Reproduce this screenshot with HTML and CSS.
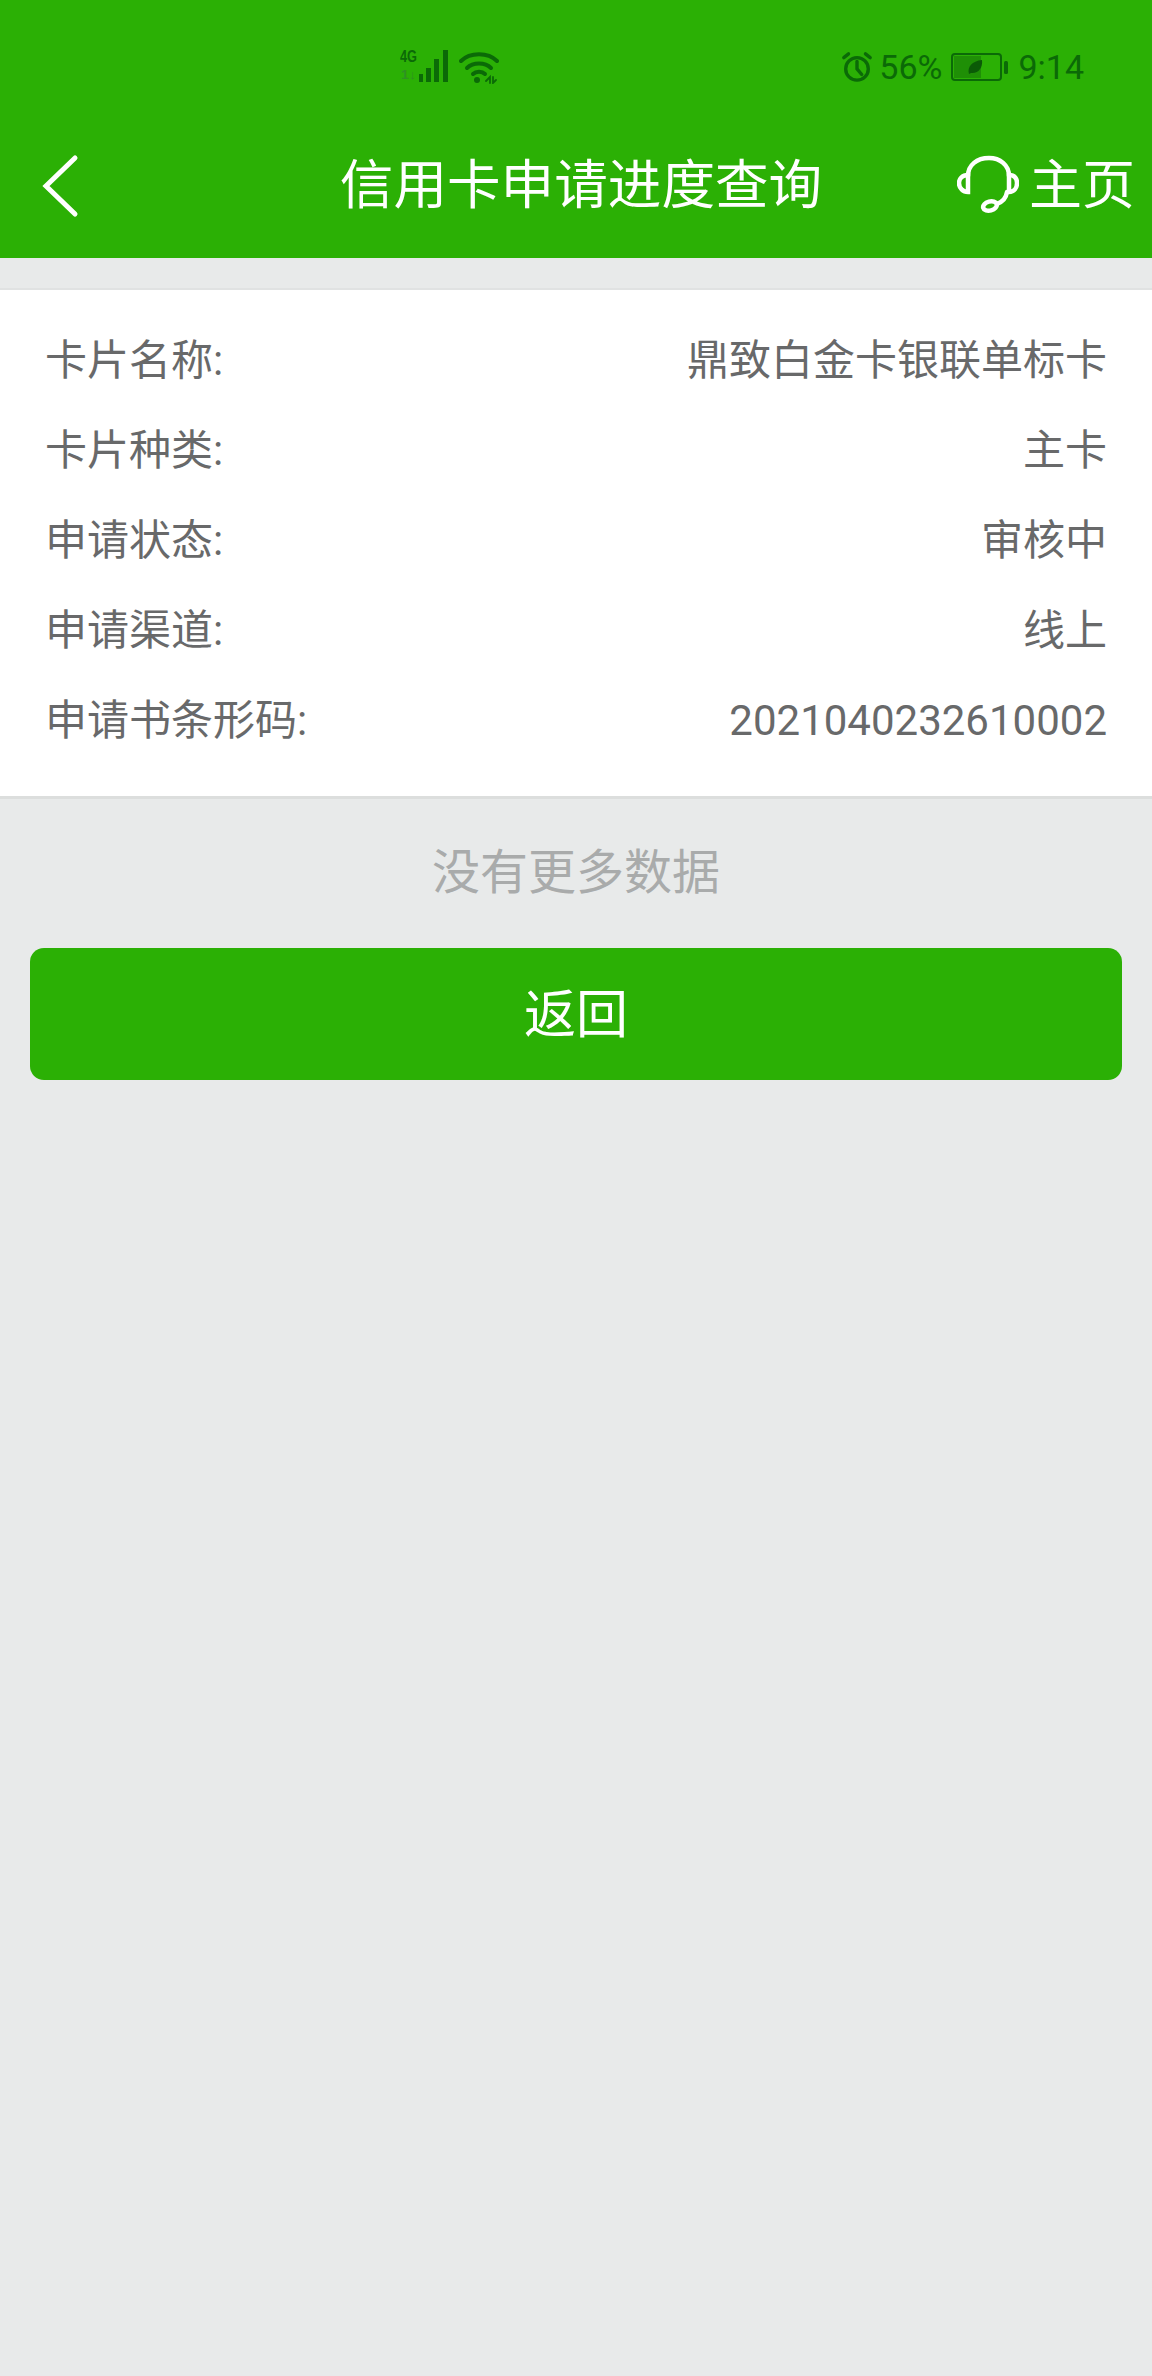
FILE: index.html
```html
<!DOCTYPE html>
<html lang="zh-CN">
<head>
<meta charset="UTF-8">
<meta name="viewport" content="width=device-width, initial-scale=1.0">
<title>信用卡申请进度查询</title>
<link rel="stylesheet" href="styles.css">
</head>
<body>
<div class="header">
    <div class="status-bar">
        <div class="status-left">
            <svg class="icon-signal" width="52" height="36" viewBox="0 0 52 36">
                <text x="0" y="13" class="net-type" textLength="17" lengthAdjust="spacingAndGlyphs">4G</text>
                <text x="1" y="30" class="net-sub" textLength="15" lengthAdjust="spacingAndGlyphs">1↓</text>
                <rect x="19" y="25" width="4" height="8" fill="#0b6a07"/>
                <rect x="26" y="19" width="5" height="14" fill="#0b6a07"/>
                <rect x="34" y="10" width="5" height="23" fill="#0b6a07"/>
                <rect x="43" y="1" width="5" height="32" fill="#0b6a07"/>
            </svg>
            <svg class="icon-wifi" width="40" height="34" viewBox="0 0 40 34" fill="none" stroke="#0b6a07" stroke-width="4" stroke-linecap="round">
                <path d="M2 11C11 2 29 2 38 11"/>
                <path d="M8 18C14 12 26 12 32 18"/>
                <path d="M14 24C17 21 23 21 26 24"/>
                <circle cx="18" cy="30" r="3" fill="#0b6a07" stroke="none"/>
                <path d="M27 31l4-4v6M34 27v6l3-3" stroke-width="1.8"/>
            </svg>
        </div>
        <div class="status-right">
            <svg class="icon-alarm" width="32" height="32" viewBox="0 0 34 34" fill="none" stroke="#0b6a07" stroke-width="3.6" stroke-linecap="round">
                <circle cx="17" cy="19" r="12"/>
                <path d="M17 11v8l5 6"/>
                <path d="M3 7l5-4M31 7l-5-4"/>
            </svg>
            <span class="status-text">56%</span>
            <svg class="icon-battery" width="58" height="28" viewBox="0 0 58 28">
                <rect x="1" y="1" width="49" height="26" rx="3" fill="none" stroke="#0b6a07" stroke-width="2"/>
                <rect x="3" y="3" width="27" height="22" fill="#1f8f06"/>
                <path d="M18 21C16 14 21 8 31 7C32 15 27 21 20 20Z" fill="#0b5a07"/>
                <rect x="53" y="8" width="4" height="13" rx="1.5" fill="#0b6a07"/>
            </svg>
            <span class="status-text">9:14</span>
        </div>
    </div>
    <div class="nav-bar">
        <svg class="icon-back" width="40" height="64" viewBox="0 0 40 64" fill="none" stroke="#fff" stroke-width="5" stroke-linecap="round" stroke-linejoin="miter">
            <path d="M34 4L5 32L34 60"/>
        </svg>
        <div class="nav-title">信用卡申请进度查询</div>
        <div class="nav-home">
            <svg class="icon-headset" width="62" height="58" viewBox="0 0 62 58" fill="none" stroke="#fff" stroke-width="4.5" stroke-linecap="round">
                <path d="M11 21C11 10 20 3 32 3C43 3 52 10 52 21"/>
                <path d="M11 20C5 20 2 24 2 28C2 33 6 37 11 37Z"/>
                <path d="M52 20C58 20 60 24 60 28C60 33 57 37 52 37Z"/>
                <path d="M50 37C49 44 45 47 40 49"/>
                <ellipse cx="33" cy="51" rx="7" ry="4.5" transform="rotate(-15 33 51)"/>
            </svg>
            <span>主页</span>
        </div>
    </div>
</div>

<div class="card">
    <div class="row"><span>卡片名称:</span><span>鼎致白金卡银联单标卡</span></div>
    <div class="row"><span>卡片种类:</span><span>主卡</span></div>
    <div class="row"><span>申请状态:</span><span>审核中</span></div>
    <div class="row"><span>申请渠道:</span><span>线上</span></div>
    <div class="row"><span>申请书条形码:</span><span>2021040232610002</span></div>
</div>

<div class="no-more">没有更多数据</div>
<button class="back-btn">返回</button>
</body>
</html>
```

FILE: styles.css
```css
* {
    box-sizing: border-box;
}

body {
    margin: 0;
    min-height: 2376px;
    background-color: #e8eaea;
    font-family: Roboto, "Noto Sans CJK SC", sans-serif;
}

.header {
    height: 258px;
    background-color: #2bb005;
}

.status-bar {
    display: flex;
    justify-content: space-between;
    align-items: center;
    height: 134px;
    padding: 0 68px 0 400px;
    color: #0b6a07;
}

.status-left,
.status-right {
    display: flex;
    align-items: center;
}

.status-left {
    gap: 7px;
}

.status-right {
    gap: 9px;
}

.icon-alarm {
    margin-right: -3px;
}

.status-text {
    font-size: 34px;
    line-height: 40px;
}

.net-type {
    font-family: "Liberation Sans", sans-serif;
    font-size: 16px;
    font-weight: bold;
    fill: #0b6a07;
}

.net-sub {
    font-family: "Liberation Sans", sans-serif;
    font-size: 13px;
    font-weight: bold;
    fill: #2f9222;
}

.nav-bar {
    display: flex;
    align-items: center;
    height: 104px;
    padding: 0 17px 0 41px;
    color: #fff;
}

.icon-back {
    flex: none;
}

.icon-headset {
    margin-bottom: 4px;
}

.nav-title {
    flex: 1;
    padding-left: 124px;
    text-align: center;
    font-size: 53.6px;
    line-height: 64px;
}

.nav-home {
    display: flex;
    align-items: center;
    gap: 10px;
    font-size: 53px;
    line-height: 64px;
}

.card {
    margin-top: 30px;
    padding: 26px 45px 30px;
    background-color: #fff;
    border-top: 2px solid #e0e2e2;
    border-bottom: 3px solid #dcdedd;
}

.row {
    display: flex;
    justify-content: space-between;
    height: 90px;
    font-size: 42px;
    line-height: 90px;
    color: #68696a;
}

.no-more {
    margin-top: 42px;
    text-align: center;
    font-size: 48px;
    line-height: 64px;
    color: #a9abab;
}

.back-btn {
    display: block;
    width: 1092px;
    height: 132px;
    margin: 43px 30px 0;
    padding: 0 0 8px;
    border: 0;
    border-radius: 14px;
    background-color: #2bb005;
    color: #fff;
    font-family: inherit;
    font-size: 52px;
}
```
